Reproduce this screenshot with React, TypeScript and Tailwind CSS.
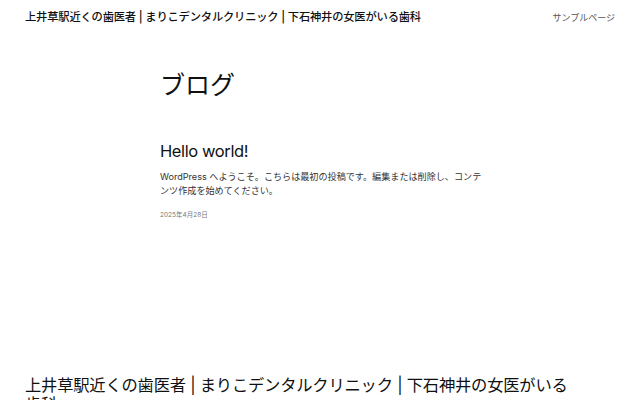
export default function App() {
  return (
    <div className="h-[400px] w-[640px] overflow-hidden bg-white font-['Inter','Noto_Sans_CJK_JP',sans-serif] text-[#111]">
      <header className="flex items-center justify-between px-[25px] pt-[9px]">
        <p className="text-[11.3px] font-medium leading-[17px] tracking-[-0.2px]">
          上井草駅近くの歯医者 | まりこデンタルクリニック | 下石神井の女医がいる歯科
        </p>
        <nav className="text-[9px] leading-[17px] text-[#555]">サンプルページ</nav>
      </header>

      <main className="ml-[160px] w-[326px] pt-[44px]">
        <h1 className="text-[25px] font-normal leading-[30px]">ブログ</h1>

        <article className="mt-[40px]">
          <h2 className="text-[16.5px] font-normal leading-[22px] tracking-[-0.4px]">Hello world!</h2>
          <p className="mt-[8px] text-[9.1px] leading-[13.5px] text-[#333]">
            WordPress へようこそ。こちらは最初の投稿です。編集または削除し、コンテンツ作成を始めてください。
          </p>
          <p className="mt-[13px] text-[6.5px] leading-[10px] text-[#777]">2025年4月28日</p>
        </article>
      </main>

      <footer className="mt-[156px] px-[25px]">
        <p className="w-[552px] text-[16.3px] font-normal leading-[19px] tracking-[-0.2px]">
          上井草駅近くの歯医者 | まりこデンタルクリニック | 下石神井の女医がいる歯科
        </p>
      </footer>
    </div>
  );
}
